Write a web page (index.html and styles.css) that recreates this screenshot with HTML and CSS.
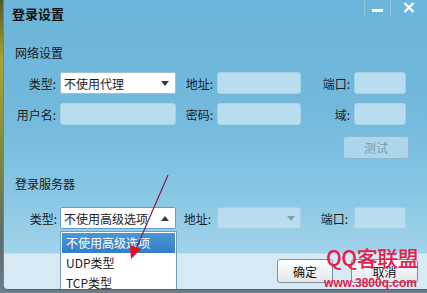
FILE: index.html
```html
<!DOCTYPE html>
<html lang="zh-CN">
<head>
<meta charset="utf-8">
<title>登录设置</title>
<link rel="stylesheet" href="styles.css">
</head>
<body>
<div class="desk">
  <div class="window">
    <div class="titlebar">
      <div class="title">登录设置</div>
      <div class="controls">
        <div class="ctl ctl-min"><span class="bar"></span></div>
        <div class="ctl ctl-close">
          <svg width="12" height="11" viewBox="0 0 12 11"><path d="M1.5 1 L10.5 10 M10.5 1 L1.5 10" stroke="#fff" stroke-width="2.4" fill="none"/></svg>
        </div>
      </div>
    </div>

    <div class="main">
      <div class="section-title net">网络设置</div>
      <div class="grid">
        <label class="lbl">类型:</label>
        <div class="combo white"><span>不使用代理</span><span class="arrow down"></span></div>
        <label class="lbl">地址:</label>
        <div class="field"></div>
        <label class="lbl">端口:</label>
        <div class="field"></div>

        <label class="lbl">用户名:</label>
        <div class="field"></div>
        <label class="lbl">密码:</label>
        <div class="field"></div>
        <label class="lbl">域:</label>
        <div class="field"></div>
      </div>
      <div class="test-row"><button class="btn-test">测试</button></div>

      <div class="section-title srv">登录服务器</div>
      <div class="grid grid-srv">
        <label class="lbl">类型:</label>
        <div class="combo white focus"><span>不使用高级选项</span><span class="arrow up"></span></div>
        <label class="lbl">地址:</label>
        <div class="combo disabled"><span></span><span class="arrow down light"></span></div>
        <label class="lbl">端口:</label>
        <div class="field"></div>
      </div>
    </div>

    <div class="footer">
      <button class="btn">确定</button>
      <button class="btn btn-cancel">取消</button>
    </div>

    <ul class="dropdown">
      <li class="sel">不使用高级选项</li>
      <li>UDP类型</li>
      <li>TCP类型</li>
    </ul>

    <svg class="pointer" width="60" height="90" viewBox="0 0 60 90">
      <line x1="43" y1="2" x2="11" y2="76" stroke="#7a2250" stroke-width="1.2"/>
      <polygon points="6,86 5,72 16,76" fill="#e0102a"/>
    </svg>

    <div class="watermark">
      <div class="wm-big">QQ客联盟</div>
      <div class="wm-small">www.3800q.com</div>
    </div>
  </div>
</div>
</body>
</html>
```

FILE: styles.css
```css
* { box-sizing: border-box; }
html, body { margin: 0; padding: 0; }
body {
  width: 427px;
  height: 293px;
  overflow: hidden;
  font-family: "Noto Sans CJK SC", "Liberation Sans", sans-serif;
  font-size: 12px;
  color: #1b1b1b;
  background: linear-gradient(180deg, #4c5a2a 0px, #a6a830 60px, #7d8a3c 150px, #5f6a6a 240px, #6d7f8c 293px);
}
.desk { height: 293px; padding-left: 3px; }
.window {
  position: relative;
  height: 290px;
  display: flex;
  flex-direction: column;
  background: linear-gradient(180deg, #6bb5da 0px, #72b9dc 110px, #86c6e3 190px, #a2d3ea 253px);
  border-left: 1px solid #5a8aa6;
  border-bottom: 1px solid #3f6678;
  border-bottom-left-radius: 5px;
  overflow: hidden;
}
.titlebar {
  height: 30px;
  display: flex;
  justify-content: space-between;
  align-items: flex-start;
}
.title {
  padding: 6px 0 0 8px;
  font-size: 13px;
  font-weight: bold;
  color: #111;
  line-height: 16px;
}
.controls { display: flex; }
.ctl {
  height: 16px;
  display: flex;
  align-items: center;
  justify-content: center;
}
.ctl-min {
  width: 27px;
  border-left: 1px solid #8fc7e2;
  border-right: 1px solid #8fc7e2;
}
.ctl-min .bar {
  width: 11px;
  height: 3px;
  background: #fff;
  margin-top: 4px;
}
.ctl-close { width: 36px; padding-bottom: 2px; }

.main { flex: 1; display: flex; flex-direction: column; }
.section-title { font-size: 12px; line-height: 16px; padding-left: 11px; color: #1b1b1b; }
.section-title.net { margin-top: 15px; }
.section-title.srv { margin-top: 17px; }

.grid {
  display: grid;
  grid-template-columns: 56px 116px 41px 84px 53px 52px;
  grid-auto-rows: 22px;
  row-gap: 9px;
  margin-top: 11px;
}
.grid-srv { margin-top: 15px; }
.grid-srv .lbl:nth-child(1) { padding-right: 3px; }
.grid-srv .lbl:nth-child(3) { padding-right: 6px; }
.grid-srv .lbl:nth-child(5) { padding-right: 6px; }
.lbl {
  display: flex;
  align-items: center;
  justify-content: flex-end;
  padding-right: 4px;
  font-size: 12px;
  white-space: nowrap;
}
.field {
  background: #b7ddef;
  border: 1px solid #a6d0e5;
  border-radius: 3px;
}
.combo {
  display: flex;
  align-items: center;
  justify-content: space-between;
  padding: 0 6px 0 3px;
  border-radius: 2px;
  font-size: 12px;
}
.combo.white { background: #fff; border: 1px solid #9fc1d6; }
.combo.white.focus { border-color: #5f9fcf; }
.combo.disabled { background: #b9ddee; border: 1px solid #a6cfe3; border-radius: 3px; padding-right: 5px; }
.arrow { width: 0; height: 0; border-left: 4px solid transparent; border-right: 4px solid transparent; }
.arrow.down { border-top: 5px solid #3a3a3a; }
.arrow.up { border-bottom: 5px solid #3a3a3a; }
.arrow.down.light { border-top-color: #7f9fb0; }

.test-row { display: flex; justify-content: flex-end; padding-right: 18px; margin-top: 11px; }
.btn-test {
  width: 66px;
  height: 23px;
  border: 1px solid #8bb9d3;
  border-radius: 3px;
  background: #acd6ec;
  color: #7d9db0;
  font-family: inherit;
  font-size: 12px;
  padding: 0;
}

.footer {
  height: 36px;
  background: #d7eaf4;
  border-top: 1px solid #c4dfee;
  display: flex;
  justify-content: flex-end;
  align-items: flex-start;
  padding: 5px 9px 0 0;
  gap: 18px;
}
.btn {
  width: 56px;
  height: 24px;
  border: 1px solid #7f8f9c;
  border-radius: 3px;
  background: linear-gradient(180deg, #ffffff, #eef1f4 60%, #e2e7eb);
  font-family: inherit;
  font-size: 12px;
  color: #111;
  padding: 0;
}
.btn-cancel { width: 67px; }

.dropdown {
  position: absolute;
  left: 56px;
  top: 231px;
  width: 117px;
  height: 70px;
  margin: 0;
  padding: 1px;
  list-style: none;
  background: #fff;
  border: 1px solid #6e9dc0;
}
.dropdown li {
  height: 20px;
  line-height: 20px;
  padding-left: 4px;
  font-size: 12px;
  color: #1b1b1b;
}
.dropdown li.sel {
  height: 20px;
  line-height: 20px;
  background: linear-gradient(180deg, #4d96d6, #327fc6);
  color: #fff;
}

.pointer { position: absolute; left: 121px; top: 173px; }

.watermark {
  position: absolute;
  left: 319px;
  top: 244px;
  color: #e4204a;
  text-align: center;
  pointer-events: none;
}
.wm-big {
  font-family: "Noto Sans CJK SC", sans-serif;
  font-size: 21px;
  font-weight: 500;
  line-height: 26px;
  letter-spacing: -0.5px;
  padding-left: 3px;
}
.wm-small {
  font-family: "Liberation Sans", sans-serif;
  font-weight: bold;
  font-size: 12px;
  line-height: 14px;
  margin-top: 6px;
}
```
